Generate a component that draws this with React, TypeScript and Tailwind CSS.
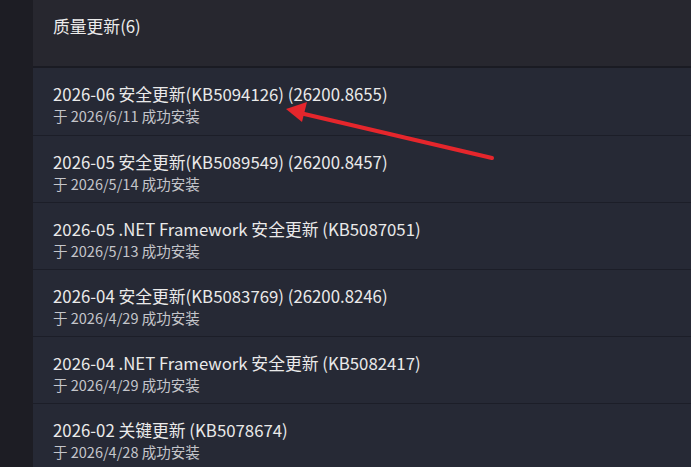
import React from "react";

const rows = [
  { t: "2026-06 安全更新(KB5094126) (26200.8655)", s: "于 2026/6/11 成功安装" },
  { t: "2026-05 安全更新(KB5089549) (26200.8457)", s: "于 2026/5/14 成功安装" },
  { t: "2026-05 .NET Framework 安全更新 (KB5087051)", s: "于 2026/5/13 成功安装" },
  { t: "2026-04 安全更新(KB5083769) (26200.8246)", s: "于 2026/4/29 成功安装" },
  { t: "2026-04 .NET Framework 安全更新 (KB5082417)", s: "于 2026/4/29 成功安装" },
  { t: "2026-02 关键更新 (KB5078674)", s: "于 2026/4/28 成功安装" },
];

export default function App() {
  return (
    <div
      className="relative flex w-[691px] h-[467px] overflow-hidden bg-[#1d1d24]"
      style={{ fontFamily: '"Noto Sans CJK SC", "Noto Sans", sans-serif' }}
    >
      <div className="w-[33px] shrink-0 bg-[#1d1d24]" />
      <div className="flex-1 flex flex-col bg-[#1c1e27]">
        <div className="h-[66px] shrink-0 bg-[#27272f] flex items-center pl-[20px] pb-[14px]">
          <span className="text-[16.8px] leading-[22px] text-[#ececec]">质量更新(6)</span>
        </div>
        <div className="h-[2px] shrink-0 bg-[#1a1b23]" />
        {rows.map((r, i) => (
          <div
            key={i}
            className={`h-[67px] shrink-0 bg-[#262935] pl-[20px] pt-[15px] ${i > 0 ? "border-t border-[#1c1e28]" : ""}`}
          >
            <div className="text-[16.8px] leading-[22px] text-[#eaeaea] whitespace-nowrap">{r.t}</div>
            <div className="mt-[1px] text-[14.5px] leading-[20px] text-[#c4c5ca] whitespace-nowrap">{r.s}</div>
          </div>
        ))}
      </div>
      <svg className="absolute left-0 top-0" width="691" height="467" viewBox="0 0 691 467">
        <line x1="492" y1="158" x2="300" y2="113" stroke="#e5262c" strokeWidth="4" strokeLinecap="round" />
        <polygon points="286,109 307,102 302,122" fill="#e5262c" />
      </svg>
    </div>
  );
}
